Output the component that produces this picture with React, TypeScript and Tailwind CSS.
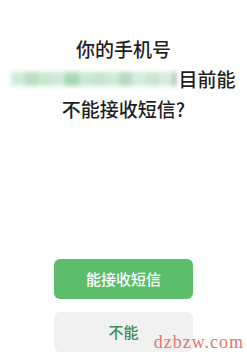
export default function App() {
  const blocks = [
    "#d2ecd7", "#b9e0c1", "#c9e8cf", "#cfead5", "#a9d8b3", "#cde9d3",
    "#c4e5ca", "#d0ebd6", "#b5ddbd", "#d4ede0", "#c8e7ce", "#d6eed9",
  ];
  return (
    <div className="relative h-[356px] w-[247px] bg-white flex flex-col overflow-hidden font-['Noto_Sans_CJK_SC','Noto_Sans',sans-serif]">
      <div className="pt-[34px] flex flex-col items-center text-[19px] leading-[30px] font-medium text-[#1f1f1f]">
        <div>你的手机号</div>
        <div className="flex items-center">
          <div className="flex h-[14px] w-[164px] mr-[3px] blur-[2px]">
            {blocks.map((c, i) => (
              <div key={i} className="flex-1" style={{ backgroundColor: c }} />
            ))}
            <div className="w-[3px] bg-[#a4aca6]" />
          </div>
          <span>目前能</span>
        </div>
        <div>不能接收短信?</div>
      </div>

      <div className="mt-auto mb-[4px] flex flex-col items-center gap-[13px]">
        <button className="w-[139px] h-[40px] rounded-[6px] bg-[#5cbd6c] text-white text-[15px] font-medium">
          能接收短信
        </button>
        <button className="w-[139px] h-[40px] rounded-[6px] bg-[#f1f1f1] text-[#3d8c52] text-[15px] font-medium">
          不能
        </button>
      </div>

      <div className="absolute right-[3px] bottom-[5px] text-[18px] leading-none tracking-[1px] text-[#e57373] font-['Liberation_Serif',serif]">
        dzbzw.com
      </div>
    </div>
  );
}
